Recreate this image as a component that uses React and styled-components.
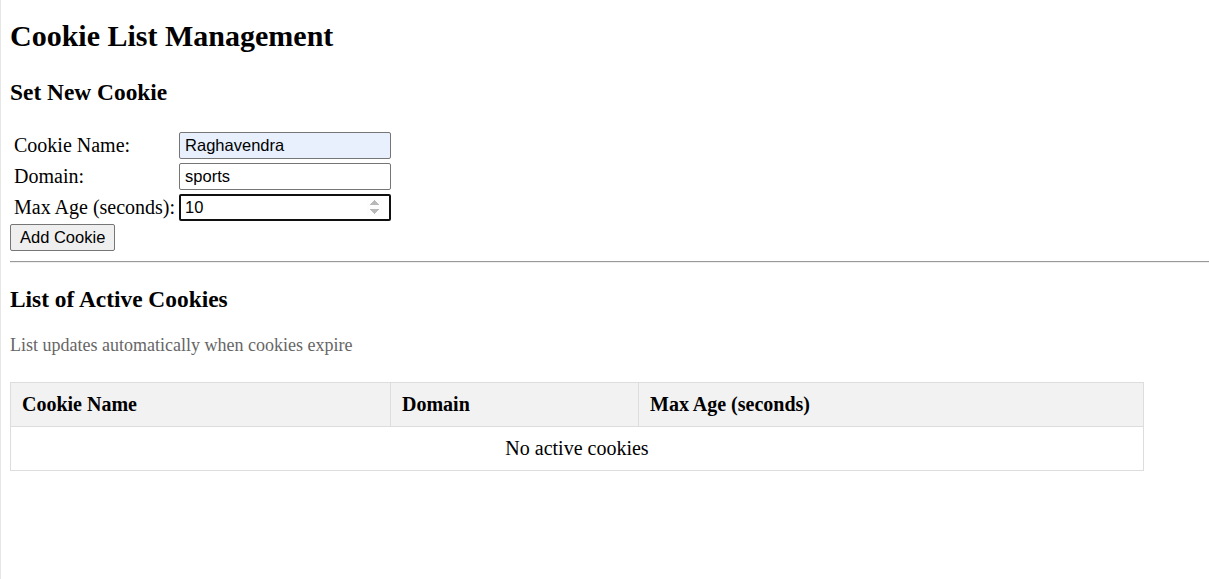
import React, { useState } from 'react';
import styled, { createGlobalStyle } from 'styled-components';

const GlobalStyle = createGlobalStyle`
  html, body {
    margin: 0;
    padding: 0;
    background: #fff;
  }
  body {
    font-family: "Liberation Serif", "Times New Roman", serif;
    color: #000;
    border-left: 1px solid #e6e6e6;
    min-height: 579px;
    box-sizing: border-box;
  }
`;

const Page = styled.div`
  display: flow-root;
  padding: 0 0 0 9px;
`;

const Title = styled.h1`
  font-size: 30px;
  font-weight: bold;
  line-height: 36px;
  margin: 18px 0 0;
`;

const SectionTitle = styled.h3`
  font-size: 23.4px;
  font-weight: bold;
  line-height: 27px;
  margin: ${(props) => props.$top} 0 0;
`;

const FormTable = styled.table`
  border-spacing: 2px;
  margin-top: 23px;
`;

const Label = styled.td`
  font-size: 20px;
  line-height: 23px;
  padding: 1px 1px 1px 2px;
  white-space: nowrap;
`;

const Cell = styled.td`
  padding: 1px;
`;

const Input = styled.input`
  display: block;
  font-family: "Liberation Sans", Arial, sans-serif;
  font-size: 16.5px;
  width: 212px;
  height: 27px;
  box-sizing: border-box;
  padding: 1px 4px;
  border: ${(props) => (props.$focused ? '2px solid #101010' : '1px solid #767676')};
  padding-left: ${(props) => (props.$focused ? '4px' : '5px')};
  border-radius: 2px;
  background: ${(props) => (props.$filled ? '#e8f0fe' : '#fff')};
  color: #000;
  outline: none;

  &::-webkit-inner-spin-button {
    opacity: 0.6;
    margin-right: 3px;
  }
`;

const AddButton = styled.button`
  display: block;
  font-family: "Liberation Sans", Arial, sans-serif;
  font-size: 16.5px;
  height: 27px;
  padding: 1px 9px;
  border: 1px solid #767676;
  border-radius: 2px;
  background: #efefef;
  color: #000;
`;

const Rule = styled.hr`
  border: none;
  border-top: 1px solid #9a9a9a;
  border-bottom: 1px solid #eee;
  margin: 10px 0 0;
`;

const Note = styled.p`
  font-size: 18px;
  line-height: 21px;
  color: #666;
  margin: 22px 0 0;
`;

const CookieTable = styled.table`
  width: 1134px;
  border-collapse: collapse;
  margin-top: 26px;
  font-size: 20px;
  line-height: 23px;
`;

const Th = styled.th`
  box-sizing: border-box;
  text-align: left;
  background: #f2f2f2;
  border: 1px solid #ddd;
  padding: 10px 11px;
  width: ${(props) => props.$w || 'auto'};
`;

const Td = styled.td`
  border: 1px solid #ddd;
  padding: 10px 11px;
  text-align: center;
`;

export default function App() {
  const [name, setName] = useState('Raghavendra');
  const [domain, setDomain] = useState('sports');
  const [age, setAge] = useState('10');

  return (
    <>
      <GlobalStyle />
      <Page>
        <Title>Cookie List Management</Title>
        <SectionTitle $top="25px">Set New Cookie</SectionTitle>
        <FormTable>
          <tbody>
            <tr>
              <Label>Cookie Name:</Label>
              <Cell>
                <Input $filled value={name} onChange={(e) => setName(e.target.value)} />
              </Cell>
            </tr>
            <tr>
              <Label>Domain:</Label>
              <Cell>
                <Input value={domain} onChange={(e) => setDomain(e.target.value)} />
              </Cell>
            </tr>
            <tr>
              <Label>Max Age (seconds):</Label>
              <Cell>
                <Input $focused type="number" value={age} onChange={(e) => setAge(e.target.value)} />
              </Cell>
            </tr>
          </tbody>
        </FormTable>
        <AddButton type="button">Add Cookie</AddButton>
        <Rule />
        <SectionTitle $top="23px">List of Active Cookies</SectionTitle>
        <Note>List updates automatically when cookies expire</Note>
        <CookieTable>
          <thead>
            <tr>
              <Th $w="380px">Cookie Name</Th>
              <Th $w="248px">Domain</Th>
              <Th>Max Age (seconds)</Th>
            </tr>
          </thead>
          <tbody>
            <tr>
              <Td colSpan={3}>No active cookies</Td>
            </tr>
          </tbody>
        </CookieTable>
      </Page>
    </>
  );
}
